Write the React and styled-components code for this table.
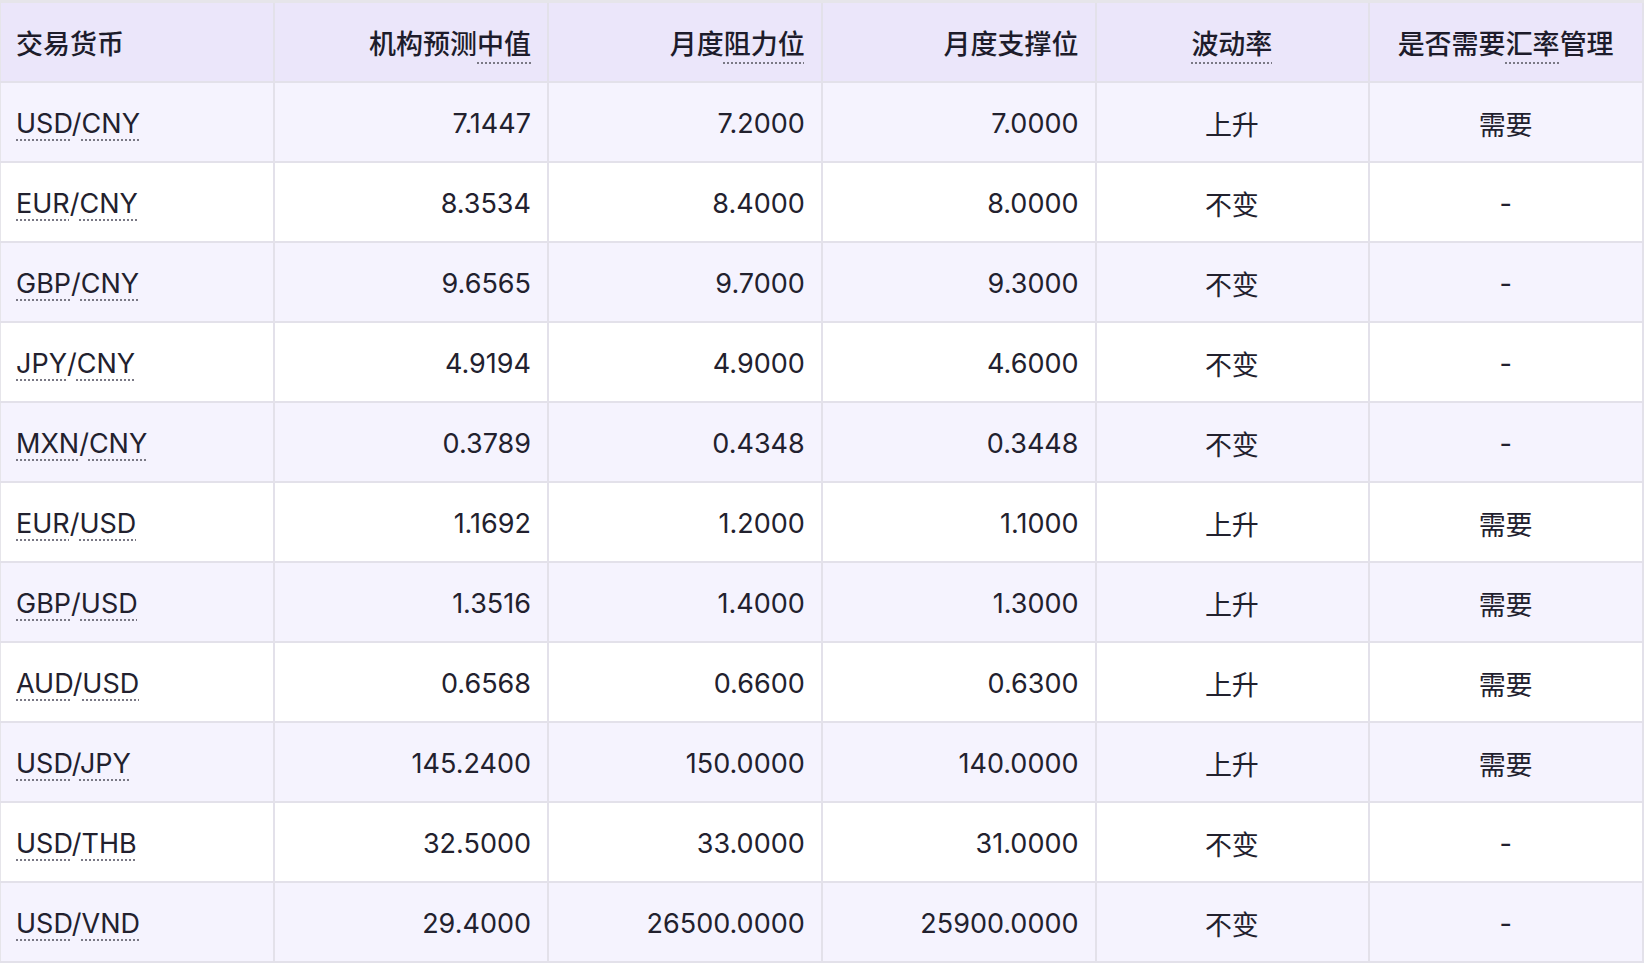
import React from 'react';
import styled, { createGlobalStyle } from 'styled-components';

const GlobalStyle = createGlobalStyle`
  html, body {
    margin: 0;
    padding: 0;
    background: #ffffff;
  }
  body {
    font-family: Inter, "Noto Sans CJK SC", "Noto Sans", sans-serif;
    color: #1d1c2b;
  }
`;

const COLUMNS = [
  { key: 'pair', label: ['交易货币'], align: 'left' },
  { key: 'median', label: ['机构预测', { term: '中值' }], align: 'right' },
  { key: 'resist', label: ['月度', { term: '阻力位' }], align: 'right' },
  { key: 'support', label: ['月度支撑位'], align: 'right' },
  { key: 'vol', label: [{ term: '波动率' }], align: 'center' },
  { key: 'manage', label: ['是否需要', { term: '汇率' }, '管理'], align: 'center' },
];

const ROWS = [
  ['USD/CNY', '7.1447', '7.2000', '7.0000', '上升', '需要'],
  ['EUR/CNY', '8.3534', '8.4000', '8.0000', '不变', '-'],
  ['GBP/CNY', '9.6565', '9.7000', '9.3000', '不变', '-'],
  ['JPY/CNY', '4.9194', '4.9000', '4.6000', '不变', '-'],
  ['MXN/CNY', '0.3789', '0.4348', '0.3448', '不变', '-'],
  ['EUR/USD', '1.1692', '1.2000', '1.1000', '上升', '需要'],
  ['GBP/USD', '1.3516', '1.4000', '1.3000', '上升', '需要'],
  ['AUD/USD', '0.6568', '0.6600', '0.6300', '上升', '需要'],
  ['USD/JPY', '145.2400', '150.0000', '140.0000', '上升', '需要'],
  ['USD/THB', '32.5000', '33.0000', '31.0000', '不变', '-'],
  ['USD/VND', '29.4000', '26500.0000', '25900.0000', '不变', '-'],
];

const Table = styled.table`
  width: 100%;
  border-collapse: collapse;
  table-layout: fixed;
  border-top: 3px solid #e6e5ea;
  border-right: 2px solid #e6e5ea;
  border-bottom: 2px solid #e6e5ea;
  border-left: 1px solid #e6e5ea;
`;

const HeadRow = styled.tr`
  background: #ebe6fa;
`;

const BodyRow = styled.tr`
  background: ${({ $striped }) => ($striped ? '#f5f3fe' : '#ffffff')};
`;

const HeadCell = styled.th`
  height: 80px;
  padding: 2px 16px 0 15px;
  border-right: 2px solid #e3e1ea;
  border-bottom: 2px solid #e3e1ea;
  text-align: ${({ $align }) => $align};
  font-size: 27px;
  font-weight: 500;
  color: #1d1c2b;
  white-space: nowrap;
  box-sizing: border-box;
`;

const Cell = styled.td`
  height: 80px;
  padding: 3px 16px 0 15px;
  border-right: 2px solid #e3e1ea;
  border-bottom: 2px solid #e3e1ea;
  text-align: ${({ $align }) => $align};
  font-size: 27px;
  font-weight: 400;
  color: #22212e;
  white-space: nowrap;
  box-sizing: border-box;
`;

const Term = styled.span`
  text-decoration: underline dotted;
  text-decoration-color: #7a7985;
  text-decoration-thickness: 1.5px;
  text-underline-offset: ${({ $head }) => ($head ? '8px' : '7px')};
`;

function Label({ parts }) {
  return parts.map((part, i) =>
    typeof part === 'string' ? (
      <React.Fragment key={i}>{part}</React.Fragment>
    ) : (
      <Term key={i} $head>
        {part.term}
      </Term>
    )
  );
}

function Pair({ value }) {
  const [base, quote] = value.split('/');
  return (
    <>
      <Term>{base}</Term>/<Term>{quote}</Term>
    </>
  );
}

export default function App() {
  return (
    <>
      <GlobalStyle />
      <Table>
        <thead>
          <HeadRow>
            {COLUMNS.map((col) => (
              <HeadCell key={col.key} $align={col.align}>
                <Label parts={col.label} />
              </HeadCell>
            ))}
          </HeadRow>
        </thead>
        <tbody>
          {ROWS.map((row, r) => (
            <BodyRow key={row[0]} $striped={r % 2 === 0}>
              {row.map((value, c) => (
                <Cell key={COLUMNS[c].key} $align={COLUMNS[c].align}>
                  {c === 0 ? <Pair value={value} /> : value}
                </Cell>
              ))}
            </BodyRow>
          ))}
        </tbody>
      </Table>
    </>
  );
}
